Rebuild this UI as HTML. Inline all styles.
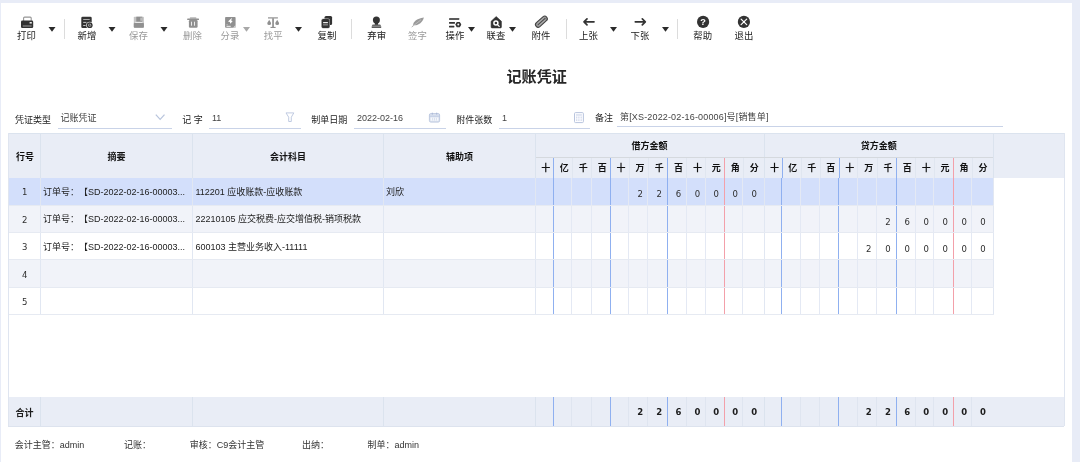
<!DOCTYPE html><html lang="zh-CN"><head><meta charset="utf-8"><title>记账凭证</title><style>
*{margin:0;padding:0;box-sizing:border-box}
html,body{width:1080px;height:462px;overflow:hidden}
body{text-spacing-trim:space-all;background:#e8ecf7;font-family:"Liberation Sans","Noto Sans CJK SC",sans-serif;font-size:9px;color:#222;position:relative;line-height:1}
.abs{position:absolute}
#root{position:absolute;left:0;top:0;width:1080px;height:462px;will-change:transform;filter:blur(0.3px)}
#panel{position:absolute;left:1px;top:3px;width:1071px;height:459px;background:#fff}
.tb{position:absolute;top:30.2px;font-size:9.4px;color:#1a1a1a;white-space:nowrap;transform:translateX(-50%);line-height:12px}
.tb.dis{color:#9a9a9a}
.ico{position:absolute;top:14px;width:16px;height:16px;transform:translateX(-50%)}
.arr{position:absolute;width:0;height:0;border-left:3.7px solid transparent;border-right:3.7px solid transparent;border-top:5.2px solid #2a2a2a}
.arr.dis{border-top-color:#aaa}
.sep{position:absolute;top:19px;width:1px;height:20px;background:#dcdcdc}
#title{position:absolute;left:0;width:1073.4px;top:67.6px;text-align:center;font-size:15.1px;font-weight:bold;color:#262626;line-height:18px}
.lbl{position:absolute;font-size:9px;color:#222;white-space:nowrap;line-height:12px}
.val{position:absolute;font-size:9px;color:#444;white-space:nowrap;line-height:12px}
.ul{position:absolute;height:1px;background:#c9d3e8}
.cell{position:absolute;white-space:nowrap;line-height:12px;font-size:9px;color:#222}
.hd{position:absolute;white-space:nowrap;line-height:12px;font-size:9px;font-weight:bold;color:#111;transform:translateX(-50%)}
.vl{position:absolute;width:1px}
.hl{position:absolute;height:1px}
.dg{position:absolute;font-family:"DejaVu Sans",sans-serif;font-size:8.5px;line-height:12px;transform:translateX(-50%);color:#2e2e2e}
</style></head><body>
<div id="root">
<div id="panel"></div>
<div class="tb" style="left:26.5px">打印</div>
<div class="tb" style="left:87px">新增</div>
<div class="tb dis" style="left:138.5px">保存</div>
<div class="tb dis" style="left:192.5px">删除</div>
<div class="tb dis" style="left:230px">分录</div>
<div class="tb dis" style="left:273.2px">找平</div>
<div class="tb" style="left:327px">复制</div>
<div class="tb" style="left:376.7px">弃审</div>
<div class="tb dis" style="left:417.5px">签字</div>
<div class="tb" style="left:455px">操作</div>
<div class="tb" style="left:496px">联查</div>
<div class="tb" style="left:541px">附件</div>
<div class="tb" style="left:588.5px">上张</div>
<div class="tb" style="left:640px">下张</div>
<div class="tb" style="left:702.7px">帮助</div>
<div class="tb" style="left:743.9px">退出</div>
<div class="sep" style="left:63.8px"></div>
<div class="sep" style="left:351.3px"></div>
<div class="sep" style="left:565.6px"></div>
<div class="sep" style="left:677.2px"></div>
<svg class="abs" style="left:0;top:0" width="1080" height="50" viewBox="0 0 1080 50">
<rect x="23.6" y="17.1" width="7.6" height="5" rx="1" fill="#fff" stroke="#959595" stroke-width="1.1"/>
<rect x="21" y="20.6" width="12.2" height="7.5" rx="1.3" fill="#333"/>
<rect x="29.6" y="22.1" width="2.2" height="1.4" fill="#fff"/>
<rect x="22.8" y="25.2" width="8.8" height="1.6" fill="#777"/>
<rect x="81.3" y="16.7" width="10.4" height="11.3" rx="1.3" fill="#333"/>
<rect x="83.2" y="19" width="6.5" height="1" fill="#a8a8a8"/>
<rect x="83.2" y="21.9" width="3.2" height="0.9" fill="#d6d6d6"/>
<rect x="83.2" y="25" width="2.4" height="0.9" fill="#d6d6d6"/>
<circle cx="89.7" cy="25.2" r="3.5" fill="#fff"/>
<circle cx="89.7" cy="25.2" r="2.9" fill="#333"/>
<circle cx="89.7" cy="25.2" r="1.45" fill="#d0d0d0"/>
<path d="M88.6 25.2H90.8M89.7 24.1V26.3" stroke="#333" stroke-width="0.8" fill="none"/>
<rect x="133.8" y="16.7" width="10.1" height="11" rx="0.8" fill="#c4c4c4"/>
<rect x="133.8" y="22.9" width="10.1" height="4.8" rx="0.8" fill="#909090"/>
<rect x="136.3" y="16.7" width="5.9" height="5.1" fill="#8f8f8f"/>
<rect x="140.4" y="17.6" width="1.4" height="3.2" fill="#c8c8c8"/>
<rect x="135.2" y="21.9" width="7.3" height="0.9" fill="#f2f2f2"/>
<rect x="189.8" y="17.2" width="6.6" height="1.6" rx="0.6" fill="#b5b5b5"/>
<rect x="187.2" y="18.4" width="11.8" height="1.5" rx="0.5" fill="#909090"/>
<rect x="188.9" y="20" width="8.7" height="7.8" rx="1.2" fill="#909090"/>
<rect x="191" y="21.7" width="0.9" height="4" fill="#f4f4f4"/>
<rect x="194.1" y="21.7" width="0.9" height="4" fill="#f4f4f4"/>
<rect x="225.1" y="16.9" width="10.5" height="10.8" rx="0.8" fill="#909090"/>
<path d="M232 17.8 L228 21.4 L229.9 21.9 L230.3 23.7 L232.6 21.2 L231.2 20.5Z" fill="#fff"/>
<rect x="226.5" y="25.8" width="4.2" height="1.1" fill="#ececec"/>
<rect x="226.5" y="24.4" width="1.2" height="0.8" fill="#d4d4d4"/>
<path d="M233 27.7 L235.6 25 L235.6 27.7Z" fill="#d8d8d8"/>
<rect x="268" y="17.3" width="9.9" height="1.2" fill="#909090"/>
<rect x="272.2" y="18.2" width="1.7" height="9" fill="#909090"/>
<rect x="270.5" y="26.9" width="5.1" height="1.1" fill="#909090"/>
<path d="M269.2 19.8 C269.8 21.2 271.09999999999997 22.3 271.09999999999997 23.4 A1.9 1.7 0 0 1 267.3 23.4 C267.3 22.3 268.59999999999997 21.2 269.2 19.8Z" fill="#909090"/>
<path d="M277.2 19.8 C277.8 21.2 279.09999999999997 22.3 279.09999999999997 23.4 A1.9 1.7 0 0 1 275.3 23.4 C275.3 22.3 276.59999999999997 21.2 277.2 19.8Z" fill="#909090"/>
<rect x="324.5" y="15.9" width="7.6" height="9" rx="1.5" fill="#333"/>
<rect x="321.2" y="18.5" width="8.8" height="9.9" rx="1.9" fill="#bdbdbd"/>
<rect x="321.7" y="19" width="7.8" height="9" rx="1.5" fill="#333"/>
<rect x="323.1" y="22.1" width="4.8" height="1.1" fill="#fff"/>
<rect x="323.1" y="24.3" width="4.8" height="1.1" fill="#999"/>
<circle cx="376.4" cy="20.1" r="3.5" fill="#333"/>
<rect x="374.8" y="22" width="3.3" height="3" fill="#333"/>
<path d="M372.6 24.4 H380.2 L381.2 26.3 H371.7Z" fill="#6a6a6a"/>
<rect x="371.7" y="26.5" width="9.5" height="1.3" fill="#333"/>
<path d="M413.2 24.9 C412.8 22.4 416.6 18.3 423.9 17.5 C422.6 22.4 418.6 25.4 414.4 25.3 Z" fill="#9a9a9a"/>
<path d="M411.8 27 L421 19.8" stroke="#c9c9c9" stroke-width="0.7" fill="none"/>
<path d="M411.8 27 L413.8 25.2" stroke="#aaa" stroke-width="0.8" fill="none"/>
<rect x="449" y="18.1" width="10.3" height="1.8" rx="0.4" fill="#5a5a5a"/>
<rect x="449" y="22" width="6" height="1.7" rx="0.4" fill="#333"/>
<rect x="449" y="25.8" width="5.4" height="1.7" rx="0.4" fill="#333"/>
<path d="M455.9 24.6 L457.1 22.5 H459.5 L460.7 24.6 L459.5 26.7 H457.1Z" fill="#333" stroke="#333" stroke-width="1.1" stroke-linejoin="round"/>
<circle cx="458.3" cy="24.6" r="1" fill="#f4f4f4"/>
<path d="M496.2 16.6 L501.4 21.3 V27 Q501.4 27.9 500.5 27.9 H492 Q491.1 27.9 491.1 27 V21.3Z" fill="#333" stroke="#333" stroke-width="0.6" stroke-linejoin="round"/>
<circle cx="495.9" cy="23.1" r="2" fill="#333" stroke="#fff" stroke-width="1.5"/>
<path d="M497.7 24.9 L499.2 26.4" stroke="#fff" stroke-width="1.3" stroke-linecap="round"/>
<g transform="rotate(-42 541.4 21.7)"><rect x="534.4" y="19.1" width="14" height="5.2" rx="2.6" fill="#9c9c9c" stroke="#444" stroke-width="1.1"/><path d="M537 21.7 H546.4" stroke="#4a4a4a" stroke-width="1" stroke-linecap="round"/><path d="M537.4 23 H545" stroke="#c4c4c4" stroke-width="0.5"/><path d="M537.6 20.4 H545.4" stroke="#c4c4c4" stroke-width="0.5"/></g>
<path d="M594 21.8 H584.4 M587 18.8 L584 21.8 L587 24.8" stroke="#333" stroke-width="1.7" fill="none" stroke-linecap="round" stroke-linejoin="round"/>
<path d="M635.3 21.8 H645 M642.3 18.8 L645.3 21.8 L642.3 24.8" stroke="#333" stroke-width="1.7" fill="none" stroke-linecap="round" stroke-linejoin="round"/>
<circle cx="703.1" cy="21.9" r="6.1" fill="#333"/>
<text x="703.1" y="25.2" text-anchor="middle" font-family="Liberation Sans, sans-serif" font-weight="bold" font-size="9.2" fill="#fff">?</text>
<circle cx="743.9" cy="21.9" r="6.1" fill="#333"/>
<path d="M741.1 19.1 L746.7 24.7 M746.7 19.1 L741.1 24.7" stroke="#fff" stroke-width="1.2" stroke-linecap="round"/>
<path d="M48.5 27.1 H55.5 L52 31.7Z" fill="#2a2a2a"/>
<path d="M108.5 27.1 H115.5 L112 31.7Z" fill="#2a2a2a"/>
<path d="M160.5 27.1 H167.5 L164 31.7Z" fill="#2a2a2a"/>
<path d="M243.0 27.1 H250.0 L246.5 31.7Z" fill="#a8a8a8"/>
<path d="M295.0 27.1 H302.0 L298.5 31.7Z" fill="#2a2a2a"/>
<path d="M468.0 27.1 H475.0 L471.5 31.7Z" fill="#2a2a2a"/>
<path d="M509.0 27.1 H516.0 L512.5 31.7Z" fill="#2a2a2a"/>
<path d="M610.0 27.1 H617.0 L613.5 31.7Z" fill="#2a2a2a"/>
<path d="M662.0 27.1 H669.0 L665.5 31.7Z" fill="#2a2a2a"/>
</svg>
<div id="title">记账凭证</div>
<div class="lbl" style="left:14.9px;top:113.8px">凭证类型</div>
<div class="val" style="left:60.4px;top:111.5px">记账凭证</div>
<div class="ul" style="left:57.5px;top:128px;width:114.4px"></div>
<div class="lbl" style="left:182.3px;top:113.8px">记 字</div>
<div class="val" style="left:212px;top:112px">11</div>
<div class="ul" style="left:209px;top:128px;width:91.7px"></div>
<div class="lbl" style="left:311.3px;top:113.8px">制单日期</div>
<div class="val" style="left:357px;top:112px">2022-02-16</div>
<div class="ul" style="left:354px;top:128px;width:91.5px"></div>
<div class="lbl" style="left:456.3px;top:113.8px">附件张数</div>
<div class="val" style="left:502px;top:112px">1</div>
<div class="ul" style="left:499px;top:128px;width:91.2px"></div>
<div class="lbl" style="left:595px;top:112px">备注</div>
<div class="val" style="left:620px;top:111px;letter-spacing:0.16px">第[XS-2022-02-16-00006]号[销售单]</div>
<div class="ul" style="left:617px;top:126px;width:386px"></div>
<svg class="abs" style="left:0;top:100px" width="1080" height="30" viewBox="0 100 1080 30">
<path d="M155.8 114.7 L160.15 119.4 L164.5 114.7" fill="none" stroke="#b9c5dd" stroke-width="1.25"/>
<path d="M286 112.9 H293.8 L291.3 117.2 V121.5 H288.7 V117.2Z" fill="#fff" stroke="#b9c5de" stroke-width="0.9" stroke-linejoin="round"/>
<rect x="429.4" y="113.6" width="10.2" height="8.5" rx="1.4" fill="#dde4f1" stroke="#b9c5de" stroke-width="0.9"/>
<path d="M432.3 112.7V114.6M436.7 112.7V114.6" stroke="#a9b7d6" stroke-width="1"/>
<path d="M429.4 116.2H439.6" stroke="#b9c5de" stroke-width="0.8"/>
<rect x="430.7" y="117.6" width="7.6" height="3.1" rx="0.5" fill="#f6f8fc"/>
<path d="M432.6 117.8V120.5M434.5 117.8V120.5M436.4 117.8V120.5" stroke="#cdd6e8" stroke-width="0.7"/>
<rect x="574.5" y="112.6" width="8.9" height="10" rx="1" fill="#fdfdff" stroke="#b9c5de" stroke-width="1"/>
<rect x="576" y="114.3" width="5.9" height="1.3" fill="#d3dbec"/>
<path d="M576.7 116.6V121M578.9 116.6V121M581.2 116.6V121" stroke="#d0d8ea" stroke-width="1.1" stroke-dasharray="1.8 0.8"/>
</svg>
<div class="abs" style="left:8.4px;top:133px;width:1055.6px;height:44.69999999999999px;background:#e9edf6"></div>
<div class="abs" style="left:8.4px;top:177.7px;width:985.6px;height:27.4px;background:#d3dffb"></div>
<div class="abs" style="left:8.4px;top:205.1px;width:985.6px;height:27.4px;background:#f1f3f9"></div>
<div class="abs" style="left:8.4px;top:232.5px;width:985.6px;height:27.4px;background:#ffffff"></div>
<div class="abs" style="left:8.4px;top:259.9px;width:985.6px;height:27.4px;background:#f1f3f9"></div>
<div class="abs" style="left:8.4px;top:287.29999999999995px;width:985.6px;height:27.4px;background:#ffffff"></div>
<div class="abs" style="left:8.4px;top:397.2px;width:1055.6px;height:29.0px;background:#e9edf6"></div>
<div class="vl" style="left:39.90px;top:133px;height:44.70px;background:#dbe3ee;width:1px"></div>
<div class="vl" style="left:39.90px;top:177.7px;height:137.00px;background:#e1e7f2;width:1px"></div>
<div class="vl" style="left:39.90px;top:397.2px;height:29.00px;background:#dbe3ee;width:1px"></div>
<div class="vl" style="left:192.20px;top:133px;height:44.70px;background:#dbe3ee;width:1px"></div>
<div class="vl" style="left:192.20px;top:177.7px;height:137.00px;background:#e1e7f2;width:1px"></div>
<div class="vl" style="left:192.20px;top:397.2px;height:29.00px;background:#dbe3ee;width:1px"></div>
<div class="vl" style="left:383.00px;top:133px;height:44.70px;background:#dbe3ee;width:1px"></div>
<div class="vl" style="left:383.00px;top:177.7px;height:137.00px;background:#e1e7f2;width:1px"></div>
<div class="vl" style="left:383.00px;top:397.2px;height:29.00px;background:#dbe3ee;width:1px"></div>
<div class="vl" style="left:535.20px;top:133px;height:44.70px;background:#dbe3ee;width:1px"></div>
<div class="vl" style="left:535.20px;top:177.7px;height:137.00px;background:#e1e7f2;width:1px"></div>
<div class="vl" style="left:535.20px;top:397.2px;height:29.00px;background:#dbe3ee;width:1px"></div>
<div class="vl" style="left:764.10px;top:133px;height:44.70px;background:#dbe3ee;width:1px"></div>
<div class="vl" style="left:764.10px;top:177.7px;height:137.00px;background:#e1e7f2;width:1px"></div>
<div class="vl" style="left:764.10px;top:397.2px;height:29.00px;background:#dbe3ee;width:1px"></div>
<div class="vl" style="left:993.00px;top:133px;height:44.70px;background:#dbe3ee;width:1px"></div>
<div class="vl" style="left:993.00px;top:177.7px;height:137.00px;background:#e1e7f2;width:1px"></div>
<div class="vl" style="left:553.00px;top:157px;height:20.70px;background:#8fb0f0;width:1px"></div>
<div class="vl" style="left:553.00px;top:178.29999999999998px;height:136.40px;background:#8fb0f0;width:1.1px"></div>
<div class="vl" style="left:553.00px;top:397.2px;height:29.00px;background:#8fb0f0;width:1.1px"></div>
<div class="vl" style="left:572.00px;top:157px;height:20.70px;background:#e0e6f0;width:1px"></div>
<div class="vl" style="left:571.40px;top:177.7px;height:137.00px;background:#e4e9f4;width:1px"></div>
<div class="vl" style="left:571.40px;top:397.2px;height:29.00px;background:#dfe5f0;width:1px"></div>
<div class="vl" style="left:591.10px;top:157px;height:20.70px;background:#e0e6f0;width:1px"></div>
<div class="vl" style="left:590.50px;top:177.7px;height:137.00px;background:#e4e9f4;width:1px"></div>
<div class="vl" style="left:590.50px;top:397.2px;height:29.00px;background:#dfe5f0;width:1px"></div>
<div class="vl" style="left:609.90px;top:157px;height:20.70px;background:#8fb0f0;width:1px"></div>
<div class="vl" style="left:610.00px;top:178.29999999999998px;height:136.40px;background:#8fb0f0;width:1.1px"></div>
<div class="vl" style="left:610.00px;top:397.2px;height:29.00px;background:#8fb0f0;width:1.1px"></div>
<div class="vl" style="left:628.70px;top:157px;height:20.70px;background:#e0e6f0;width:1px"></div>
<div class="vl" style="left:628.10px;top:177.7px;height:137.00px;background:#e4e9f4;width:1px"></div>
<div class="vl" style="left:628.10px;top:397.2px;height:29.00px;background:#dfe5f0;width:1px"></div>
<div class="vl" style="left:647.90px;top:157px;height:20.70px;background:#e0e6f0;width:1px"></div>
<div class="vl" style="left:647.30px;top:177.7px;height:137.00px;background:#e4e9f4;width:1px"></div>
<div class="vl" style="left:647.30px;top:397.2px;height:29.00px;background:#dfe5f0;width:1px"></div>
<div class="vl" style="left:667.10px;top:157px;height:20.70px;background:#8fb0f0;width:1px"></div>
<div class="vl" style="left:667.00px;top:178.29999999999998px;height:136.40px;background:#8fb0f0;width:1.1px"></div>
<div class="vl" style="left:667.00px;top:397.2px;height:29.00px;background:#8fb0f0;width:1.1px"></div>
<div class="vl" style="left:686.30px;top:157px;height:20.70px;background:#e0e6f0;width:1px"></div>
<div class="vl" style="left:685.70px;top:177.7px;height:137.00px;background:#e4e9f4;width:1px"></div>
<div class="vl" style="left:685.70px;top:397.2px;height:29.00px;background:#dfe5f0;width:1px"></div>
<div class="vl" style="left:705.10px;top:157px;height:20.70px;background:#e0e6f0;width:1px"></div>
<div class="vl" style="left:704.50px;top:177.7px;height:137.00px;background:#e4e9f4;width:1px"></div>
<div class="vl" style="left:704.50px;top:397.2px;height:29.00px;background:#dfe5f0;width:1px"></div>
<div class="vl" style="left:723.90px;top:157px;height:20.70px;background:#f3a0aa;width:1px"></div>
<div class="vl" style="left:724.00px;top:178.29999999999998px;height:136.40px;background:#f3a0aa;width:1.1px"></div>
<div class="vl" style="left:724.00px;top:397.2px;height:29.00px;background:#f3a0aa;width:1.1px"></div>
<div class="vl" style="left:743.00px;top:157px;height:20.70px;background:#e0e6f0;width:1px"></div>
<div class="vl" style="left:742.40px;top:177.7px;height:137.00px;background:#e4e9f4;width:1px"></div>
<div class="vl" style="left:742.40px;top:397.2px;height:29.00px;background:#dfe5f0;width:1px"></div>
<div class="vl" style="left:781.70px;top:157px;height:20.70px;background:#8fb0f0;width:1px"></div>
<div class="vl" style="left:781.00px;top:178.29999999999998px;height:136.40px;background:#8fb0f0;width:1.1px"></div>
<div class="vl" style="left:781.00px;top:397.2px;height:29.00px;background:#8fb0f0;width:1.1px"></div>
<div class="vl" style="left:800.60px;top:157px;height:20.70px;background:#e0e6f0;width:1px"></div>
<div class="vl" style="left:800.00px;top:177.7px;height:137.00px;background:#e4e9f4;width:1px"></div>
<div class="vl" style="left:800.00px;top:397.2px;height:29.00px;background:#dfe5f0;width:1px"></div>
<div class="vl" style="left:819.70px;top:157px;height:20.70px;background:#e0e6f0;width:1px"></div>
<div class="vl" style="left:819.10px;top:177.7px;height:137.00px;background:#e4e9f4;width:1px"></div>
<div class="vl" style="left:819.10px;top:397.2px;height:29.00px;background:#dfe5f0;width:1px"></div>
<div class="vl" style="left:838.50px;top:157px;height:20.70px;background:#8fb0f0;width:1px"></div>
<div class="vl" style="left:838.00px;top:178.29999999999998px;height:136.40px;background:#8fb0f0;width:1.1px"></div>
<div class="vl" style="left:838.00px;top:397.2px;height:29.00px;background:#8fb0f0;width:1.1px"></div>
<div class="vl" style="left:857.40px;top:157px;height:20.70px;background:#e0e6f0;width:1px"></div>
<div class="vl" style="left:856.80px;top:177.7px;height:137.00px;background:#e4e9f4;width:1px"></div>
<div class="vl" style="left:856.80px;top:397.2px;height:29.00px;background:#dfe5f0;width:1px"></div>
<div class="vl" style="left:876.60px;top:157px;height:20.70px;background:#e0e6f0;width:1px"></div>
<div class="vl" style="left:876.00px;top:177.7px;height:137.00px;background:#e4e9f4;width:1px"></div>
<div class="vl" style="left:876.00px;top:397.2px;height:29.00px;background:#dfe5f0;width:1px"></div>
<div class="vl" style="left:895.90px;top:157px;height:20.70px;background:#8fb0f0;width:1px"></div>
<div class="vl" style="left:896.00px;top:178.29999999999998px;height:136.40px;background:#8fb0f0;width:1.1px"></div>
<div class="vl" style="left:896.00px;top:397.2px;height:29.00px;background:#8fb0f0;width:1.1px"></div>
<div class="vl" style="left:915.10px;top:157px;height:20.70px;background:#e0e6f0;width:1px"></div>
<div class="vl" style="left:914.50px;top:177.7px;height:137.00px;background:#e4e9f4;width:1px"></div>
<div class="vl" style="left:914.50px;top:397.2px;height:29.00px;background:#dfe5f0;width:1px"></div>
<div class="vl" style="left:933.90px;top:157px;height:20.70px;background:#e0e6f0;width:1px"></div>
<div class="vl" style="left:933.30px;top:177.7px;height:137.00px;background:#e4e9f4;width:1px"></div>
<div class="vl" style="left:933.30px;top:397.2px;height:29.00px;background:#dfe5f0;width:1px"></div>
<div class="vl" style="left:952.90px;top:157px;height:20.70px;background:#f3a0aa;width:1px"></div>
<div class="vl" style="left:953.00px;top:178.29999999999998px;height:136.40px;background:#f3a0aa;width:1.1px"></div>
<div class="vl" style="left:953.00px;top:397.2px;height:29.00px;background:#f3a0aa;width:1.1px"></div>
<div class="vl" style="left:971.70px;top:157px;height:20.70px;background:#e0e6f0;width:1px"></div>
<div class="vl" style="left:971.10px;top:177.7px;height:137.00px;background:#e4e9f4;width:1px"></div>
<div class="vl" style="left:971.10px;top:397.2px;height:29.00px;background:#dfe5f0;width:1px"></div>
<div class="hl" style="left:8.4px;top:133.00px;width:1055.60px;background:#dbe3ee"></div>
<div class="hl" style="left:535.7px;top:156.50px;width:457.80px;background:#d5d9de"></div>
<div class="hl" style="left:8.4px;top:204.60px;width:985.60px;background:#e6eaf2"></div>
<div class="hl" style="left:8.4px;top:232.00px;width:985.60px;background:#e6eaf2"></div>
<div class="hl" style="left:8.4px;top:259.40px;width:985.60px;background:#e6eaf2"></div>
<div class="hl" style="left:8.4px;top:286.80px;width:985.60px;background:#e6eaf2"></div>
<div class="hl" style="left:8.4px;top:314.20px;width:985.60px;background:#e6eaf2"></div>
<div class="hl" style="left:8.4px;top:425.70px;width:1055.60px;background:#dde3ee"></div>
<div class="vl" style="left:8.40px;top:133px;height:293.20px;background:#dfe5f0;width:1px"></div>
<div class="vl" style="left:1064.00px;top:133px;height:293.20px;background:#dfe5f0;width:1px"></div>
<div class="hd" style="left:545.80px;top:162px">十</div>
<div class="hd" style="left:564.20px;top:162px">亿</div>
<div class="hd" style="left:583.25px;top:162px">千</div>
<div class="hd" style="left:602.20px;top:162px">百</div>
<div class="hd" style="left:621.00px;top:162px">十</div>
<div class="hd" style="left:640.00px;top:162px">万</div>
<div class="hd" style="left:659.20px;top:162px">千</div>
<div class="hd" style="left:678.40px;top:162px">百</div>
<div class="hd" style="left:697.40px;top:162px">十</div>
<div class="hd" style="left:716.20px;top:162px">元</div>
<div class="hd" style="left:735.15px;top:162px">角</div>
<div class="hd" style="left:754.20px;top:162px">分</div>
<div class="hd" style="left:774.60px;top:162px">十</div>
<div class="hd" style="left:792.85px;top:162px">亿</div>
<div class="hd" style="left:811.85px;top:162px">千</div>
<div class="hd" style="left:830.80px;top:162px">百</div>
<div class="hd" style="left:849.65px;top:162px">十</div>
<div class="hd" style="left:868.70px;top:162px">万</div>
<div class="hd" style="left:887.95px;top:162px">千</div>
<div class="hd" style="left:907.20px;top:162px">百</div>
<div class="hd" style="left:926.20px;top:162px">十</div>
<div class="hd" style="left:945.10px;top:162px">元</div>
<div class="hd" style="left:964.00px;top:162px">角</div>
<div class="hd" style="left:982.90px;top:162px">分</div>
<div class="dg" style="left:640.10px;top:188.2px">2</div>
<div class="dg" style="left:659.30px;top:188.2px">2</div>
<div class="dg" style="left:678.50px;top:188.2px">6</div>
<div class="dg" style="left:697.50px;top:188.2px">0</div>
<div class="dg" style="left:716.30px;top:188.2px">0</div>
<div class="dg" style="left:735.25px;top:188.2px">0</div>
<div class="dg" style="left:754.30px;top:188.2px">0</div>
<div class="dg" style="left:888.05px;top:215.6px">2</div>
<div class="dg" style="left:907.30px;top:215.6px">6</div>
<div class="dg" style="left:926.30px;top:215.6px">0</div>
<div class="dg" style="left:945.20px;top:215.6px">0</div>
<div class="dg" style="left:964.10px;top:215.6px">0</div>
<div class="dg" style="left:983.00px;top:215.6px">0</div>
<div class="dg" style="left:868.80px;top:243.0px">2</div>
<div class="dg" style="left:888.05px;top:243.0px">0</div>
<div class="dg" style="left:907.30px;top:243.0px">0</div>
<div class="dg" style="left:926.30px;top:243.0px">0</div>
<div class="dg" style="left:945.20px;top:243.0px">0</div>
<div class="dg" style="left:964.10px;top:243.0px">0</div>
<div class="dg" style="left:983.00px;top:243.0px">0</div>
<div class="dg" style="left:640.10px;top:406.0px;font-weight:bold;color:#1c1c1c">2</div>
<div class="dg" style="left:659.30px;top:406.0px;font-weight:bold;color:#1c1c1c">2</div>
<div class="dg" style="left:678.50px;top:406.0px;font-weight:bold;color:#1c1c1c">6</div>
<div class="dg" style="left:697.50px;top:406.0px;font-weight:bold;color:#1c1c1c">0</div>
<div class="dg" style="left:716.30px;top:406.0px;font-weight:bold;color:#1c1c1c">0</div>
<div class="dg" style="left:735.25px;top:406.0px;font-weight:bold;color:#1c1c1c">0</div>
<div class="dg" style="left:754.30px;top:406.0px;font-weight:bold;color:#1c1c1c">0</div>
<div class="dg" style="left:868.80px;top:406.0px;font-weight:bold;color:#1c1c1c">2</div>
<div class="dg" style="left:888.05px;top:406.0px;font-weight:bold;color:#1c1c1c">2</div>
<div class="dg" style="left:907.30px;top:406.0px;font-weight:bold;color:#1c1c1c">6</div>
<div class="dg" style="left:926.30px;top:406.0px;font-weight:bold;color:#1c1c1c">0</div>
<div class="dg" style="left:945.20px;top:406.0px;font-weight:bold;color:#1c1c1c">0</div>
<div class="dg" style="left:964.10px;top:406.0px;font-weight:bold;color:#1c1c1c">0</div>
<div class="dg" style="left:983.00px;top:406.0px;font-weight:bold;color:#1c1c1c">0</div>
<div class="hd" style="left:24.9px;top:150.6px;font-size:9px">行号</div>
<div class="hd" style="left:116.5px;top:150.6px;font-size:9px">摘要</div>
<div class="hd" style="left:288px;top:150.6px;font-size:9px">会计科目</div>
<div class="hd" style="left:459.5px;top:150.6px;font-size:9px">辅助项</div>
<div class="hd" style="left:649.5px;top:140px;font-size:9px">借方金额</div>
<div class="hd" style="left:878.8px;top:140px;font-size:9px">贷方金额</div>
<div class="dg" style="left:24.6px;top:186.4px">1</div>
<div class="cell" style="left:43px;top:186.0px">订单号：【SD-2022-02-16-00003...</div>
<div class="cell" style="left:195.5px;top:186.0px">112201 应收账款-应收账款</div>
<div class="cell" style="left:386px;top:186.0px">刘欣</div>
<div class="dg" style="left:24.6px;top:213.8px">2</div>
<div class="cell" style="left:43px;top:213.4px">订单号：【SD-2022-02-16-00003...</div>
<div class="cell" style="left:195.5px;top:213.4px">22210105 应交税费-应交增值税-销项税款</div>
<div class="dg" style="left:24.6px;top:241.20000000000002px">3</div>
<div class="cell" style="left:43px;top:240.8px">订单号：【SD-2022-02-16-00003...</div>
<div class="cell" style="left:195.5px;top:240.8px">600103 主营业务收入-11111</div>
<div class="dg" style="left:24.6px;top:268.59999999999997px">4</div>
<div class="dg" style="left:24.6px;top:295.99999999999994px">5</div>
<div class="cell" style="left:15.6px;top:406.6px;font-weight:bold;color:#1c1c1c">合计</div>
<!--DIGITS-->
<div class="cell" style="left:14.8px;top:438.7px;color:#333">会计主管：admin</div>
<div class="cell" style="left:124px;top:438.7px;color:#333">记账：</div>
<div class="cell" style="left:189.8px;top:438.7px;color:#333">审核：C9会计主管</div>
<div class="cell" style="left:302px;top:438.7px;color:#333">出纳：</div>
<div class="cell" style="left:367.6px;top:438.7px;color:#333">制单：admin</div>
</div>
</body></html>
